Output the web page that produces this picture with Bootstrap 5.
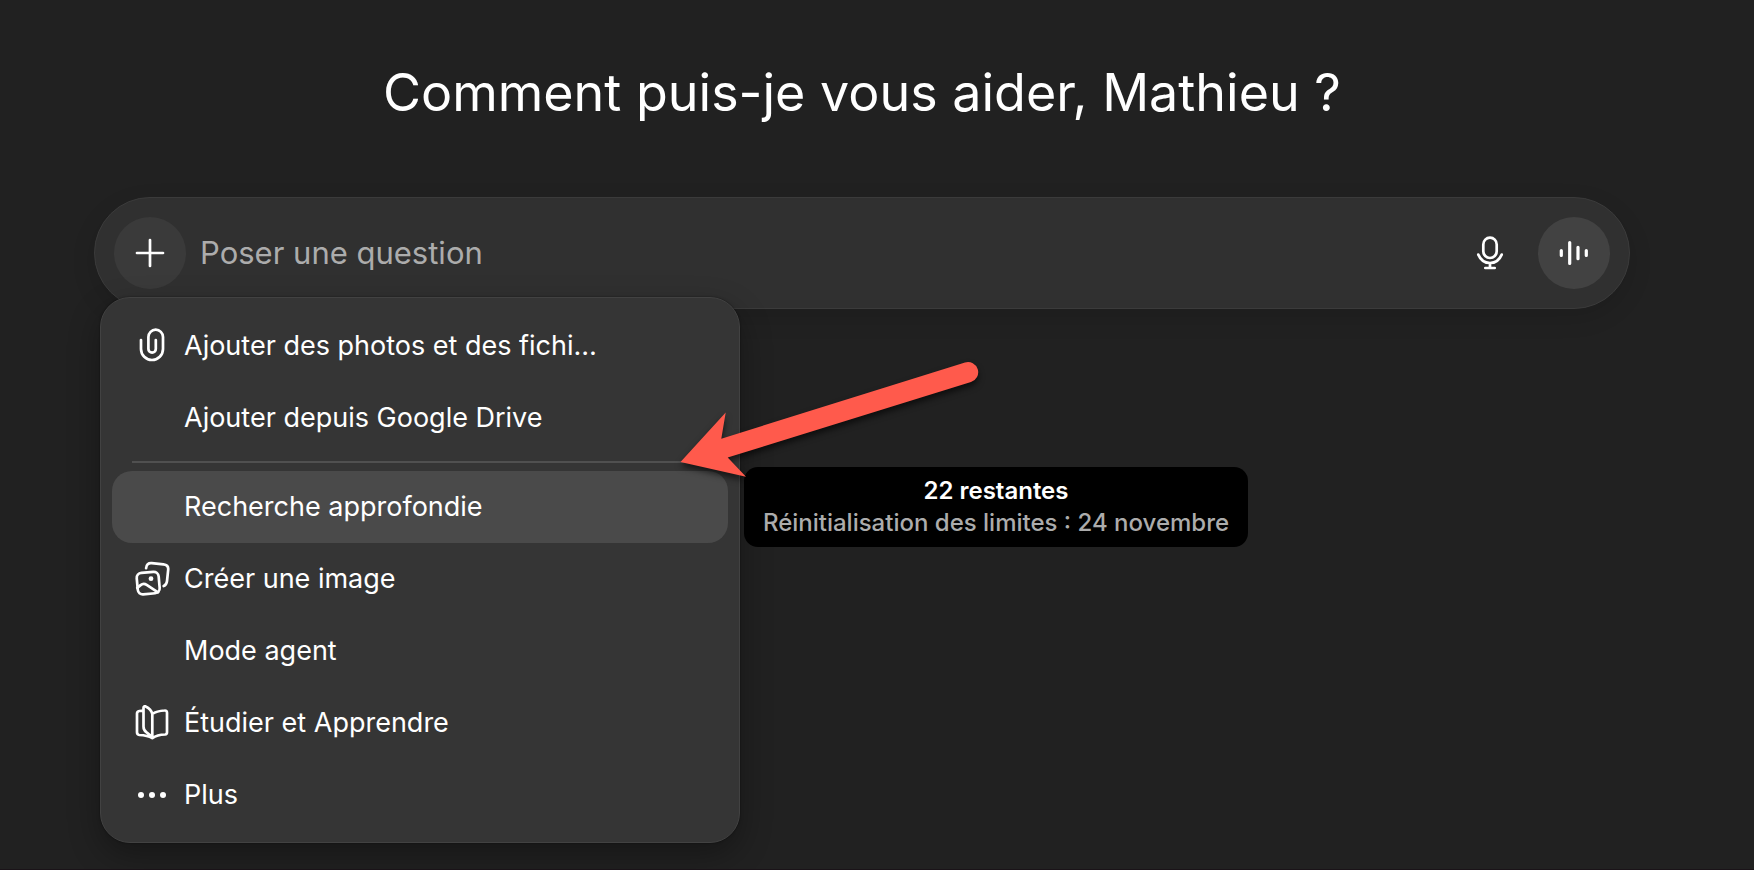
<!DOCTYPE html>
<html lang="fr">
<head>
<meta charset="utf-8">
<meta name="viewport" content="width=device-width, initial-scale=1">
<title>Assistant</title>
<link href="https://cdn.jsdelivr.net/npm/bootstrap@5.3.0/dist/css/bootstrap.min.css" rel="stylesheet">
<style>
  body { background: #212121; color: #fff; font-family: Inter, "Liberation Sans", sans-serif; border-bottom: 1px solid #1a1318; }
  .page { padding: 61px 124px 24px 94px; }
  .greeting { font-size: 52px; line-height: 64px; font-weight: 400; margin-bottom: 72px; }
  .composer { background: #303030; border: 1px solid #3b3b3b; padding: 19px; gap: 12px; border-radius: 56px; box-shadow: 0 8px 24px rgba(0,0,0,.12); }
  .round-btn { width: 72px; height: 72px; color: #fff; background: none; border: 0; border-radius: 50%; flex: none; }
  .round-btn.plus { background: #3a3a3a; }
  .round-btn.voice { background: #424242; }
  .ask, .ask:focus { background: none; border: 0; box-shadow: none; color: #fff; font-size: 31px; line-height: 40px; padding: 0 2px; }
  .ask::placeholder { color: #acacac; opacity: 1; }
  .ico { width: 36px; height: 36px; flex: none; fill: none; stroke: currentColor; stroke-width: 2.7; stroke-linecap: round; stroke-linejoin: round; }
  .ico.bars { stroke-width: 3.2; }
  .tool-menu { margin: -12px 0 0 6px; width: 640px; background: #353535; border: 1px solid #424242; border-radius: 30px; padding: 12px 11px 11px; box-shadow: 0 12px 32px rgba(0,0,0,.32), 0 0 2px rgba(0,0,0,.5); }
  .tool { height: 72px; width: 100%; border: 0; background: none; color: #fff; padding: 0 22px; gap: 14px; border-radius: 20px; font-size: 27px; line-height: 36px; text-align: left; }
  .tool.current { background: #4a4a4a; }
  .rule { height: 2px; background: #505050; opacity: 1; border: 0; margin: 7px 20px 8px; }
  .quota { left: 100%; top: 50%; transform: translateY(-50%); margin-left: 16px; min-width: 504px; background: #000; border-radius: 14px; padding: 8px 16px; font-size: 24px; line-height: 32px; font-weight: 500; white-space: nowrap; color: #acacac; }
  .quota strong { font-weight: 600; color: #fff; }
  .pointer { left: 570px; top: 50px; width: 320px; height: 140px; pointer-events: none; filter: drop-shadow(0 4px 3px rgba(0,0,0,.6)); }
</style>
</head>
<body class="min-vh-100">
<main class="page">
  <h1 class="greeting text-center">Comment puis-je vous aider, Mathieu ?</h1>
  <form class="composer d-flex align-items-center">
    <button type="button" class="round-btn plus d-flex align-items-center justify-content-center p-0" aria-label="Ajouter" aria-expanded="true">
      <svg class="ico" viewBox="0 0 36 36"><path d="M18 5v26M5 18h26"/></svg>
    </button>
    <input type="text" class="ask form-control flex-grow-1" placeholder="Poser une question" aria-label="Poser une question">
    <button type="button" class="round-btn d-flex align-items-center justify-content-center p-0" aria-label="Dicter">
      <svg class="ico" viewBox="0 0 36 36"><rect x="11.3" y="2.7" width="13.4" height="20.3" rx="6.7"/><path d="M6.3 19.6C8.5 24.8 12.8 28 18 28s9.5-3.2 11.7-8.4M18 28v5M13.3 33h9.4"/></svg>
    </button>
    <button type="button" class="round-btn voice d-flex align-items-center justify-content-center p-0" aria-label="Mode vocal">
      <svg class="ico bars" viewBox="0 0 36 36"><path d="M5.3 15.5v5M13.7 7.5v21M22 12.3v11.4M30.3 15.5v5"/></svg>
    </button>
  </form>

  <div class="tool-menu position-relative">
    <button type="button" class="tool d-flex align-items-center">
      <svg class="ico" viewBox="0 0 36 36"><path d="M7 12v9a11 11 0 0 0 22 0V9a7.3 7.3 0 0 0-14.6 0v12a3.7 3.7 0 0 0 7.4 0v-9"/></svg>
      <span>Ajouter des photos et des fichi…</span>
    </button>
    <button type="button" class="tool d-flex align-items-center"><span class="ico"></span><span>Ajouter depuis Google Drive</span></button>
    <hr class="rule">
    <div class="position-relative">
      <button type="button" class="tool current d-flex align-items-center" aria-describedby="quota"><span class="ico"></span><span>Recherche approfondie</span></button>
      <div class="quota position-absolute text-center" id="quota" role="tooltip"><strong class="d-block">22 restantes</strong>Réinitialisation des limites : 24 novembre</div>
    </div>
    <button type="button" class="tool d-flex align-items-center">
      <svg class="ico" viewBox="0 0 36 36"><rect x="3.2" y="11.3" width="22" height="21.5" rx="5" transform="rotate(-5 14.2 22)"/><path d="M3.3 26.9 6.6 24.1Q9.5 21.8 12.7 23.9L24 31.3M12.1 7.2C12.3 3.6 14.3 1.8 17.7 2.1L29.5 3.3C32.9 3.7 34.5 5.5 34.2 8.7L33 20.2C32.7 22.9 31.6 24.4 29.7 25.1"/><circle cx="17" cy="17.7" r="2.4" fill="currentColor" stroke="none"/></svg>
      <span>Créer une image</span>
    </button>
    <button type="button" class="tool d-flex align-items-center"><span class="ico"></span><span>Mode agent</span></button>
    <button type="button" class="tool d-flex align-items-center">
      <svg class="ico" viewBox="0 0 36 36"><path d="M9.5 5.6 5.3 6Q3 6.3 3 8.6v18.7Q3 29.7 5.3 30 13.5 30.4 18.3 33.2 23.3 29.7 31 29.5 33 29.3 33 27.2V7.7Q33 5.3 30.6 5.5 22.5 5.9 18.3 9V33.2M18.3 9C17.5 5.4 14.8 2.7 11.6 1.4 10.3 1 9.5 1.7 9.5 3v18.5C9.5 24.3 10.4 25.8 12.3 27.2 15.2 29.2 17 31 18.3 33.2"/></svg>
      <span>Étudier et Apprendre</span>
    </button>
    <button type="button" class="tool d-flex align-items-center">
      <svg class="ico" viewBox="0 0 36 36"><g fill="currentColor" stroke="none"><circle cx="7" cy="18" r="3"/><circle cx="18" cy="18" r="3"/><circle cx="29" cy="18" r="3"/></g></svg>
      <span>Plus</span>
    </button>
    <svg class="pointer position-absolute" viewBox="0 0 320 140" aria-hidden="true"><path fill="#ff5a4c" d="M9.5 114 54.7 64.5 50.3 90.7 294 14.5A10.2 10.2 0 0 1 300 34L56.7 109.5 75 128.8Z"/></svg>
  </div>
</main>
<script src="https://cdn.jsdelivr.net/npm/bootstrap@5.3.0/dist/js/bootstrap.bundle.min.js"></script>
</body>
</html>
